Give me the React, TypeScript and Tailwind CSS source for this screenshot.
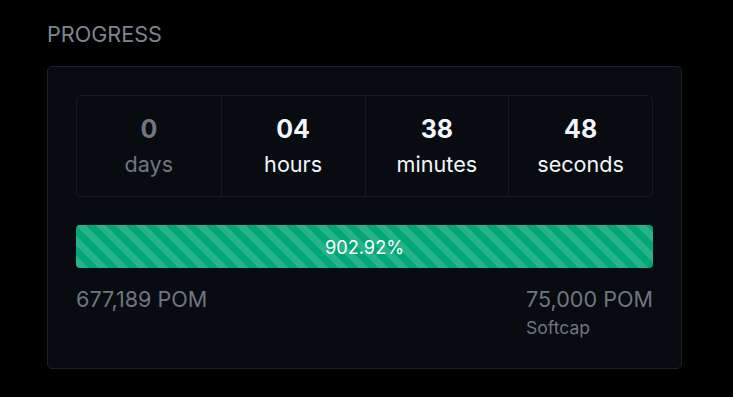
const units = [
  { value: "0", label: "days", muted: true },
  { value: "04", label: "hours", muted: false },
  { value: "38", label: "minutes", muted: false },
  { value: "48", label: "seconds", muted: false },
]

const App = () => {
  return (
    <div className="min-h-[397px] w-full bg-black px-[47px] pt-[21px] font-['Inter',sans-serif]">
      <h2 className="text-[21.6px] leading-[26px] text-[#7d8590]">PROGRESS</h2>

      <div className="mt-[19px] w-[635px] rounded-[5px] border border-[#1b2026] bg-[#080b0f] px-[28px] pt-[28px] pb-[29px]">
        <div className="grid grid-cols-4 rounded-[5px] border border-[#161b21]">
          {units.map((u, i) => (
            <div
              key={u.label}
              className={
                "flex h-[100px] flex-col items-center justify-center gap-[7px] pb-[2px] " +
                (i > 0 ? "border-l border-[#161b21]" : "")
              }
            >
              <span
                className={
                  "text-[25px] leading-[30px] font-bold " +
                  (u.muted ? "text-[#6e7681]" : "text-[#f0f6fc]")
                }
              >
                {u.value}
              </span>
              <span
                className={
                  "text-[21.6px] leading-[26px] " +
                  (u.muted ? "text-[#6e7681]" : "text-[#f0f6fc]")
                }
              >
                {u.label}
              </span>
            </div>
          ))}
        </div>

        <div className="mt-[28px] flex h-[43px] items-center justify-center rounded-[4px] bg-[#00a676] bg-[linear-gradient(45deg,rgba(255,255,255,0.15)_25%,transparent_25%,transparent_50%,rgba(255,255,255,0.15)_50%,rgba(255,255,255,0.15)_75%,transparent_75%,transparent)] bg-[length:20px_20px]">
          <span className="text-[18.2px] leading-[22px] text-white">902.92%</span>
        </div>

        <div className="mt-[18px] flex justify-between text-[#6e7681]">
          <span className="text-[21.6px] leading-[26px]">677,189 POM</span>
          <div className="flex flex-col items-start">
            <span className="text-[21.6px] leading-[26px]">75,000 POM</span>
            <span className="mt-[4.5px] text-[17.55px] leading-[22px]">Softcap</span>
          </div>
        </div>
      </div>
    </div>
  )
}

export default App
